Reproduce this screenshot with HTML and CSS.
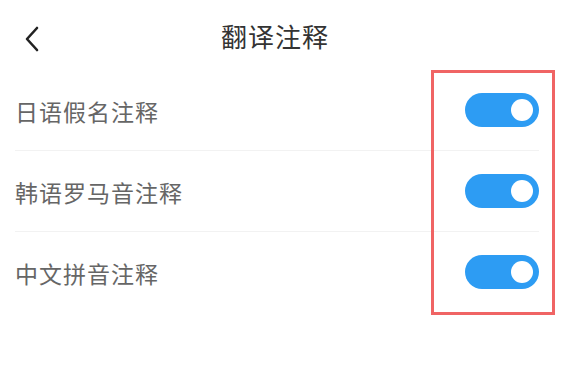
FILE: index.html
```html
<!DOCTYPE html>
<html lang="zh-CN">
<head>
    <meta charset="UTF-8">
    <meta name="viewport" content="width=device-width, initial-scale=1.0">
    <title>翻译注释</title>
    <link rel="stylesheet" href="styles.css">
</head>
<body>
    <div class="page">
        <header class="nav-bar">
            <button class="back-btn" aria-label="返回">
                <svg width="16" height="26" viewBox="0 0 16 26">
                    <path d="M13 2 L3 13 L13 24" fill="none" stroke="#222" stroke-width="2.6" stroke-linecap="round" stroke-linejoin="round"/>
                </svg>
            </button>
            <h1 class="nav-title">翻译注释</h1>
        </header>

        <ul class="setting-list">
            <li class="setting-item">
                <span class="setting-label">日语假名注释</span>
                <span class="switch on"><span class="knob"></span></span>
            </li>
            <li class="setting-item">
                <span class="setting-label">韩语罗马音注释</span>
                <span class="switch on"><span class="knob"></span></span>
            </li>
            <li class="setting-item">
                <span class="setting-label">中文拼音注释</span>
                <span class="switch on"><span class="knob"></span></span>
            </li>
        </ul>

        <!-- highlight around the switches -->
        <div class="highlight-box"></div>
    </div>
</body>
</html>
```

FILE: styles.css
```css
body {
    margin: 0;
    background-color: #fff;
    font-family: "Noto Sans CJK SC", "Noto Sans", sans-serif;
    color: #333;
}
.page {
    position: relative;
    width: 576px;
    height: 375px;
}
.nav-bar {
    display: grid;
    grid-template-columns: 50px 1fr 76px;
    align-items: center;
    height: 70px;
}
.back-btn {
    display: flex;
    align-items: center;
    justify-content: center;
    background: none;
    border: none;
    padding: 0;
    margin-left: 24px;
    width: 16px;
    height: 26px;
    margin-top: 8px;
}
.nav-title {
    margin: 0;
    text-align: center;
    font-size: 26px;
    font-weight: normal;
    color: #333;
    letter-spacing: 1px;
}
.setting-list {
    list-style: none;
    margin: 0 37px 0 15px;
    padding: 0;
}
.setting-item {
    display: flex;
    align-items: center;
    justify-content: space-between;
    height: 80px;
    border-bottom: 1px solid #f2f2f2;
}
.setting-item:last-child {
    border-bottom: none;
}
.setting-label {
    font-size: 23px;
    color: #666;
    letter-spacing: 1px;
    padding-top: 2px;
}
.switch {
    position: relative;
    width: 74px;
    height: 34px;
    border-radius: 17px;
    background-color: #ddd;
}
.switch.on {
    background-color: #2d9cf3;
}
.knob {
    position: absolute;
    top: 6px;
    left: 6px;
    width: 22px;
    height: 22px;
    border-radius: 50%;
    background-color: #fff;
}
.switch.on .knob {
    left: auto;
    right: 6px;
}
.highlight-box {
    position: absolute;
    left: 431px;
    top: 70px;
    width: 124px;
    height: 245px;
    box-sizing: border-box;
    border: 3px solid #f06464;
}
```
